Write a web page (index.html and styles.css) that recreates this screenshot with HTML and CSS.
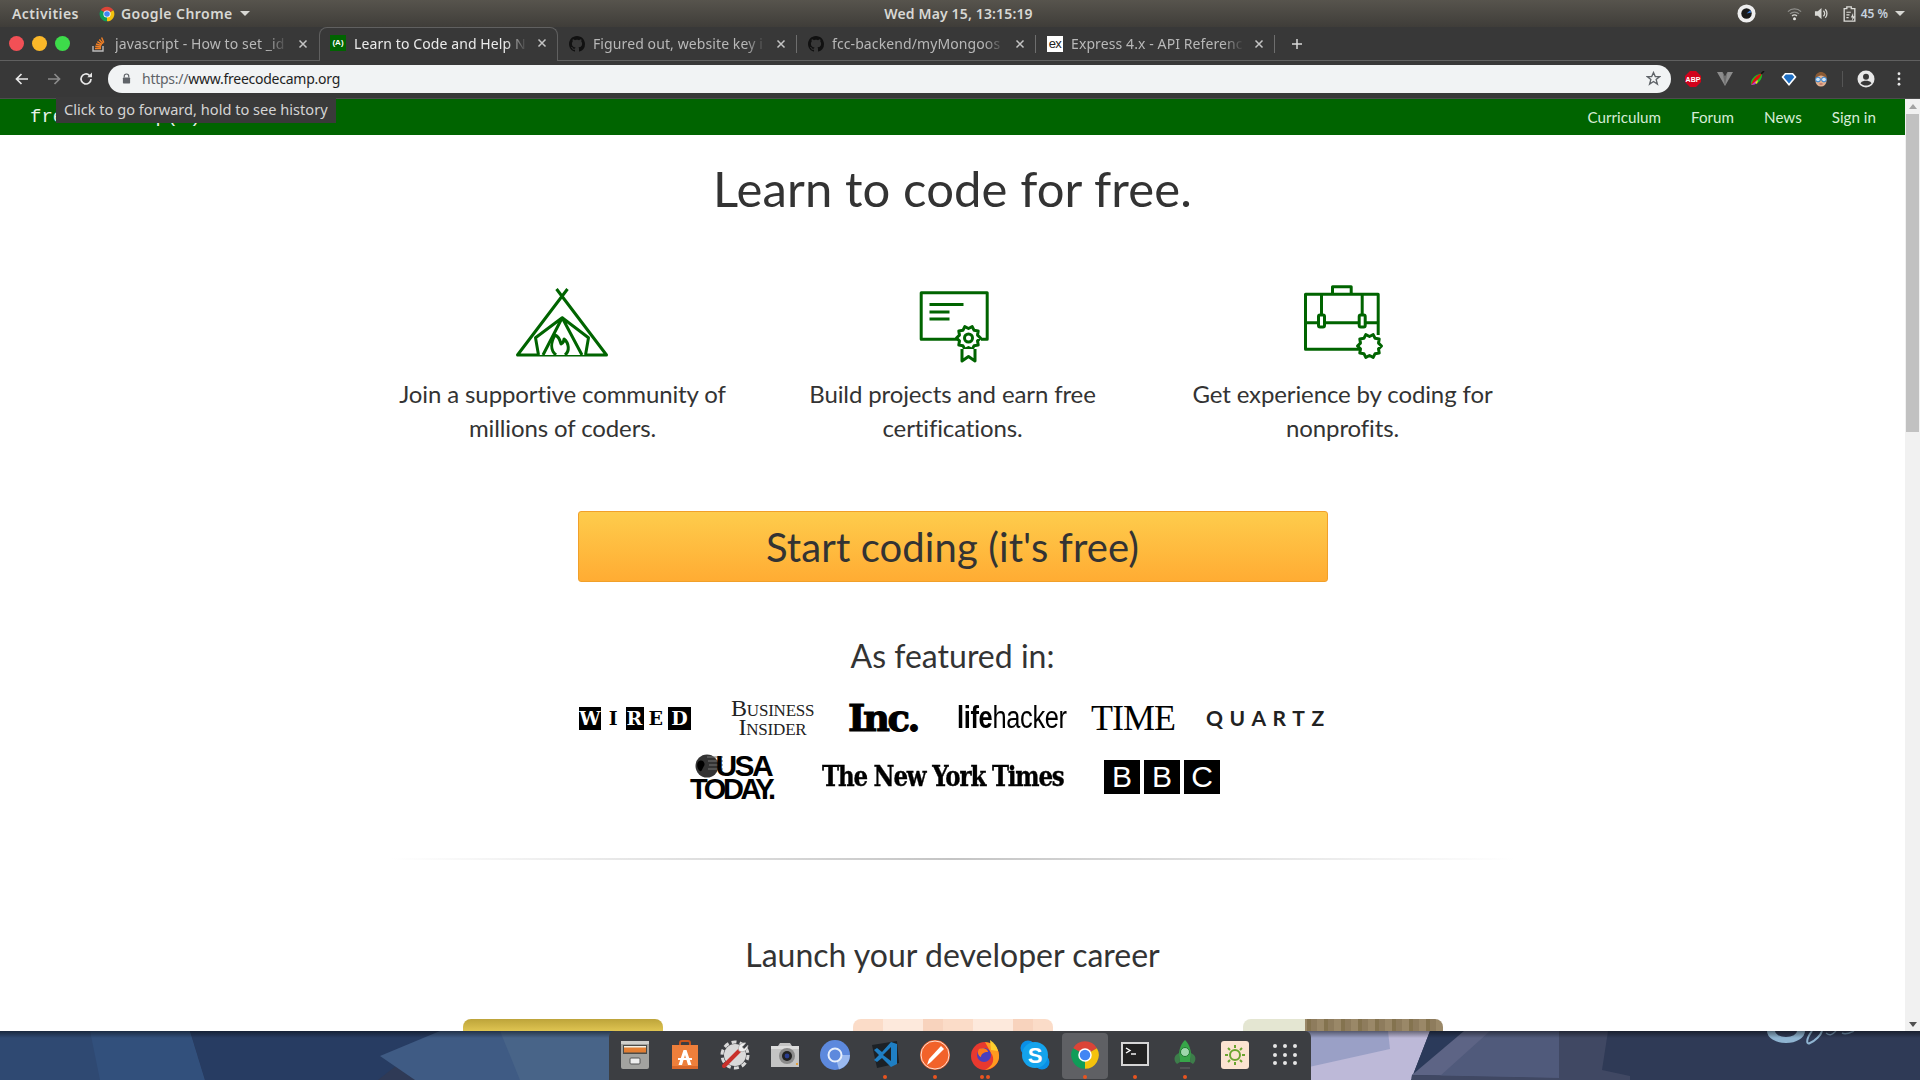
FILE: index.html
```html
<!DOCTYPE html>
<html lang="en">
<head>
<meta charset="utf-8">
<title>Learn to Code and Help Nonprofits</title>
<link rel="stylesheet" href="styles.css">
</head>
<body>
<svg class="defs" width="0" height="0">
  <symbol id="chrome" viewBox="0 0 24 24">
    <path fill="#db4437" d="M12 12 21.53 6.5A11 11 0 0 0 2.47 6.5Z"/>
    <path fill="#0f9d58" d="M12 12 2.47 6.5A11 11 0 0 0 12 23Z"/>
    <path fill="#f4c20d" d="M12 12V23A11 11 0 0 0 21.53 6.5Z"/>
    <circle cx="12" cy="12" r="5.4" fill="#fff"/>
    <circle cx="12" cy="12" r="4.2" fill="#4285f4"/>
  </symbol>
  <symbol id="github" viewBox="0 0 16 16">
    <path fill="#111" d="M8 0C3.58 0 0 3.58 0 8c0 3.54 2.29 6.53 5.47 7.59.4.07.55-.17.55-.38 0-.19-.01-.82-.01-1.49-2.01.37-2.53-.49-2.69-.94-.09-.23-.48-.94-.82-1.13-.28-.15-.68-.52-.01-.53.63-.01 1.08.58 1.23.82.72 1.21 1.87.87 2.33.66.07-.52.28-.87.51-1.07-1.78-.2-3.64-.89-3.64-3.95 0-.87.31-1.59.82-2.15-.08-.2-.36-1.02.08-2.12 0 0 .67-.21 2.2.82.64-.18 1.32-.27 2-.27.68 0 1.36.09 2 .27 1.53-1.04 2.2-.82 2.2-.82.44 1.1.16 1.92.08 2.12.51.56.82 1.27.82 2.15 0 3.07-1.87 3.75-3.65 3.95.29.25.54.73.54 1.48 0 1.07-.01 1.93-.01 2.2 0 .21.15.46.55.38A8.013 8.013 0 0016 8c0-4.42-3.58-8-8-8z"/>
  </symbol>
  <symbol id="close" viewBox="0 0 10 10">
    <path d="M1.5 1.5 8.5 8.5M8.5 1.5 1.5 8.5" fill="none" stroke="currentColor" stroke-width="1.5"/>
  </symbol>
  <polygon id="gear" points="12,0 9.03,2.94 9.71,7.05 5.58,7.69 3.71,11.41 0,9.5 -3.71,11.41 -5.58,7.69 -9.71,7.05 -9.03,2.94 -12,0 -9.03,-2.94 -9.71,-7.05 -5.58,-7.69 -3.71,-11.41 0,-9.5 3.71,-11.41 5.58,-7.69 9.71,-7.05 9.03,-2.94"/>
</svg>

<div class="screen">
  <header class="menubar">
    <div class="menu-left">
      <span class="menu-item">Activities</span>
      <span class="menu-app">
        <svg class="menu-chrome"><use href="#chrome"/></svg>
        <span class="menu-item">Google Chrome</span>
        <span class="caret"></span>
      </span>
    </div>
    <div class="clock">Wed May 15, 13:15:19</div>
    <div class="menu-right">
      <svg class="tray-rec" viewBox="0 0 20 20"><circle cx="10" cy="10" r="9.5" fill="#eee"/><circle cx="10" cy="10" r="5.5" fill="#1a1a1a"/><path d="M10 10 14 6.5 15 9Z" fill="#3a7bd5"/></svg>
      <svg class="tray-wifi" viewBox="0 0 16 16"><g fill="none" stroke="#8f8f8b" stroke-width="1.4"><path d="M1 6a10 10 0 0 1 14 0"/><path d="M3.2 8.4a7 7 0 0 1 9.6 0"/></g><path d="M5.4 10.6a3.6 3.6 0 0 1 5.2 0" fill="none" stroke="#d5d5d0" stroke-width="1.4"/><circle cx="8" cy="13.5" r="1.6" fill="#e4e4e0"/></svg>
      <svg class="tray-vol" viewBox="0 0 16 16"><path d="M1 5.5H4L8 2V14L4 10.5H1Z" fill="#d8d8d4"/><path d="M10 5a4 4 0 0 1 0 6M12 3.5a6.5 6.5 0 0 1 0 9" fill="none" stroke="#d8d8d4" stroke-width="1.4"/></svg>
      <svg class="tray-bat" viewBox="0 0 14 18"><path d="M1 3H4V1H9V3H13V17H1Z" fill="none" stroke="#dcdcd8" stroke-width="1.5"/><path d="M3.5 7H8.5M3.5 10H7M3.5 13H6" stroke="#dcdcd8" stroke-width="1.3"/><path d="M11 8 8.5 13H10.5L9.5 17 13.5 11.5H11.2Z" fill="#dcdcd8"/></svg>
      <span class="battery">45 %</span>
      <span class="caret caret-right"></span>
    </div>
  </header>

  <nav class="tabstrip">
    <div class="window-controls">
      <span class="win-dot dot-red"></span>
      <span class="win-dot dot-yellow"></span>
      <span class="win-dot dot-green"></span>
    </div>
    <div class="tab">
      <svg class="favicon" viewBox="0 0 16 16"><path d="M2 10V15H12V10" fill="none" stroke="#bcbbbb" stroke-width="1.4"/><path d="M4 12.5H10M4.3 10.2 10 11M5 8 10.4 9.5M6.3 5.7 11 8.4M8.3 3.5 12 7.6M10.6 1.5 12.8 6.6" stroke="#f48024" stroke-width="1.4"/></svg>
      <span class="tab-title">javascript - How to set _id</span>
      <svg class="tab-close"><use href="#close"/></svg>
    </div>
    <div class="tab tab-active">
      <span class="favicon fav-fcc">(A)</span>
      <span class="tab-title">Learn to Code and Help N</span>
      <svg class="tab-close"><use href="#close"/></svg>
    </div>
    <div class="tab tab-sep">
      <svg class="favicon"><use href="#github"/></svg>
      <span class="tab-title">Figured out, website key i</span>
      <svg class="tab-close"><use href="#close"/></svg>
    </div>
    <div class="tab tab-sep">
      <svg class="favicon"><use href="#github"/></svg>
      <span class="tab-title">fcc-backend/myMongoos</span>
      <svg class="tab-close"><use href="#close"/></svg>
    </div>
    <div class="tab tab-sep">
      <span class="favicon fav-ex">ex</span>
      <span class="tab-title">Express 4.x - API Referenc</span>
      <svg class="tab-close"><use href="#close"/></svg>
    </div>
    <svg class="new-tab" viewBox="0 0 12 12"><path d="M6 1V11M1 6H11" stroke="#d8d8d8" stroke-width="1.5"/></svg>
  </nav>

  <div class="toolbar">
    <div class="nav-buttons">
      <svg class="tool-icon" viewBox="0 0 16 16"><path d="M14 8H3M7.5 3 2.5 8 7.5 13" fill="none" stroke="#e8e8e8" stroke-width="1.7"/></svg>
      <svg class="tool-icon" viewBox="0 0 16 16"><path d="M2 8H13M8.5 3 13.5 8 8.5 13" fill="none" stroke="#8b8b8b" stroke-width="1.7"/></svg>
      <svg class="tool-icon" viewBox="0 0 16 16"><path d="M13 8A5 5 0 1 1 11.4 4.3" fill="none" stroke="#e8e8e8" stroke-width="1.7"/><path d="M9.3 6.3H14V1.6Z" fill="#e8e8e8"/></svg>
    </div>
    <div class="omnibox">
      <svg class="lock" viewBox="0 0 10 12"><path d="M2.5 5V3.5a2.5 2.5 0 0 1 5 0V5" fill="none" stroke="#5f6368" stroke-width="1.3"/><rect x="1" y="5" width="8" height="6.5" rx=".8" fill="#5f6368"/></svg>
      <span class="url"><span class="url-scheme">https://</span>www.freecodecamp.org</span>
      <svg class="star" viewBox="0 0 16 16"><path d="M8 1.6 9.9 6H14.6L10.8 9 12.2 14 8 11.2 3.8 14 5.2 9 1.4 6H6.1Z" fill="none" stroke="#5f6368" stroke-width="1.4"/></svg>
    </div>
    <div class="extensions">
      <svg class="ext" viewBox="0 0 16 16"><path d="M5 0H11L16 5V11L11 16H5L0 11V5Z" fill="#d0021b"/><text x="8" y="10.6" class="abp-text">ABP</text></svg>
      <svg class="ext" viewBox="0 0 16 16"><path d="M0 1H5.5L8 6 10.5 1H16L8 15Z" fill="#8c8c8c"/><path d="M5.5 1 8 6 10.5 1 8 15Z" fill="#6f6f6f"/></svg>
      <svg class="ext" viewBox="0 0 16 16"><path d="M2 14C1 9 5 4 13 2 14 8 9 14 2 14Z" fill="#19c21f"/><path d="M2 14C4 8 8 4 13 2 12 5 10 8 8 9Z" fill="#e01010"/><path d="M2 14 8 9C9 11 7 14 2 14Z" fill="#d320d3"/><path d="M6 11.5 9 9 8 13Z" fill="#f3e51a"/><path d="M12 3 15 0" stroke="#111" stroke-width="1.6"/></svg>
      <svg class="ext" viewBox="0 0 16 16"><path d="M4 2H12L15.5 6 8 15 .5 6Z" fill="#fff"/><path d="M4.8 3.5H11.2L13.4 6 8 12.5 2.6 6Z" fill="#1e6fc4"/></svg>
      <svg class="ext" viewBox="0 0 16 16"><path d="M2 8C2 3 5 1 8 1S14 3 14 8V10H2Z" fill="#8a5a34"/><ellipse cx="8" cy="10" rx="5.5" ry="5.5" fill="#e0b090"/><circle cx="5" cy="8.5" r="2.4" fill="#cfe6fa" stroke="#2b7fd0"/><circle cx="11" cy="8.5" r="2.4" fill="#cfe6fa" stroke="#2b7fd0"/><path d="M6.5 13H9.5" stroke="#a55"/></svg>
    </div>
    <span class="tool-sep"></span>
    <svg class="account" viewBox="0 0 18 18"><circle cx="9" cy="9" r="8.5" fill="#e8e8e8"/><circle cx="9" cy="6.8" r="3" fill="#383838"/><path d="M3.5 13.2C5 11 7 10.8 9 10.8S13 11 14.5 13.2C13 15 11 15.5 9 15.5S5 15 3.5 13.2Z" fill="#383838"/></svg>
    <svg class="kebab" viewBox="0 0 4 16"><circle cx="2" cy="2" r="1.6" fill="#e8e8e8"/><circle cx="2" cy="8" r="1.6" fill="#e8e8e8"/><circle cx="2" cy="14" r="1.6" fill="#e8e8e8"/></svg>
  </div>

  <div class="viewport">
    <div class="tooltip">Click to go forward, hold to see history</div>
    <main class="page">
      <div class="site-nav">
        <span class="site-logo">freeCodeCamp(Δ)</span>
        <div class="site-links">
          <a class="site-link">Curriculum</a>
          <a class="site-link">Forum</a>
          <a class="site-link">News</a>
          <a class="site-link">Sign in</a>
        </div>
      </div>

      <h1 class="headline">Learn to code for free.</h1>

      <section class="features">
        <div class="feature">
          <svg class="feature-icon" viewBox="0 0 96 80"><g class="line">
            <path d="M52.5 4 2.5 70H91.5L41.5 4"/>
            <path d="M23.5 70 20.5 52.7 47.2 32.7 73.5 52.7 70.5 70M28 70 47.2 32.7 67 70"/>
            <path d="M41 70C35 65 36 57 40 50 43 51 45 55 46 59 48 58 49 56 49 54 54 58 55 66 50 70"/>
          </g></svg>
          <p class="feature-text">Join a supportive community of millions of coders.</p>
        </div>
        <div class="feature">
          <svg class="feature-icon" viewBox="0 0 96 80"><g class="line">
            <path d="M53 54.3H16.2V7.7H82.2V54.3H76"/>
            <path d="M24.5 19.5H58.5M24.5 27H44.5M24.5 34H44.5"/>
            <use href="#gear" transform="translate(63.5 53)"/>
            <circle cx="63.5" cy="53" r="4"/>
            <path d="M57 64V76L63.5 71.5 70 76V64"/>
          </g></svg>
          <p class="feature-text">Build projects and earn free certifications.</p>
        </div>
        <div class="feature">
          <svg class="feature-icon" viewBox="0 0 96 80"><g class="line">
            <path d="M37.5 9.3V1.7H56.2V9.3"/>
            <path d="M64 64.3H10.5V9.3H83.2V50"/>
            <path d="M10.5 37.7H23.5M29.5 37.7H64M70 37.7H83.2"/>
            <path d="M26.5 9.3V30M67.2 9.3V30"/>
            <rect x="23.5" y="30" width="6" height="12" rx="1.5"/>
            <rect x="64.2" y="30" width="6" height="12" rx="1.5"/>
            <use href="#gear" transform="translate(74.5 61)"/>
          </g></svg>
          <p class="feature-text">Get experience by coding for nonprofits.</p>
        </div>
      </section>

      <a class="cta">Start coding (it's free)</a>

      <h2 class="featured-title">As featured in:</h2>
      <div class="logo-row">
        <span class="logo wired"><b class="wb w1">W</b><b class="wl w2">I</b><b class="wb w3">R</b><b class="wl w4">E</b><b class="wb w5">D</b></span>
        <span class="logo bi">Business<br>Insider</span>
        <span class="logo inc">Inc.</span>
        <span class="logo lifehacker"><b class="life">life</b>hacker</span>
        <span class="logo time">TIME</span>
        <span class="logo quartz">QUARTZ</span>
      </div>
      <div class="logo-row logo-row-2">
        <span class="logo usa">
          <svg class="usa-globe" viewBox="0 0 28 24"><circle cx="12" cy="12" r="11.5" fill="#333"/><path d="M3 8C7 4 11 9 9 12S7 18 5 17 1 11 3 8Z" fill="#000"/><path d="M12 3H28M13 7H28M14 11H28M13 15H28" stroke="#777" stroke-width="1"/></svg>
          <span class="usa-top">USA</span>
          <span class="usa-bottom">TODAY.</span>
        </span>
        <span class="logo nyt">The New York Times</span>
        <span class="logo bbc"><b class="bbc-box">B</b><b class="bbc-box">B</b><b class="bbc-box">C</b></span>
      </div>

      <div class="divider"></div>

      <h2 class="career-title">Launch your developer career</h2>
      <section class="cards">
        <div class="card-cell"><div class="card-img img-gold"></div></div>
        <div class="card-cell"><div class="card-img img-peach"></div></div>
        <div class="card-cell"><div class="card-img img-wood"></div></div>
      </section>
    </main>
    <aside class="scrollbar">
      <span class="arrow-up"></span>
      <span class="thumb"></span>
      <span class="arrow-down"></span>
    </aside>
  </div>

  <footer class="desk">
    <svg class="wallpaper" viewBox="0 0 1920 49" preserveAspectRatio="none">
      <rect width="1920" height="49" fill="#2f3a56"/>
      <polygon points="0,0 190,0 205,49 0,49" fill="#2f4972"/>
      <polygon points="90,0 190,0 205,49 100,49" fill="#32507c"/>
      <polygon points="190,0 440,0 378,49 205,49" fill="#273c62"/>
      <polygon points="440,0 620,0 620,49 415,49 380,25" fill="#3f5b84"/>
      <polygon points="500,0 620,0 620,49 520,49" fill="#486488"/>
      <polygon points="1300,0 1430,0 1411,49 1300,49" fill="#bdb9d8"/>
      <polygon points="1300,0 1388,0 1390,18 1300,38" fill="#9aa0c6"/>
      <polygon points="1430,0 1464,0 1412,44 1411,49" fill="#2b3a5a"/>
      <polygon points="1412,44 1464,0 1559,0 1559,47" fill="#5d6485"/>
      <polygon points="1490,0 1559,0 1559,47 1440,45" fill="#505a7b"/>
      <polygon points="1559,0 1608,0 1602,39 1630,45 1630,49 1412,49 1412,44 1559,47" fill="#404863"/>
      <path d="M1767 0A19 12 0 0 0 1805 0H1797A11 6 0 0 1 1775 0Z" fill="#8fb4d1"/>
      <path d="M1812 0C1806 8 1806 14 1810 12 1815 10 1821 4 1822 0" fill="none" stroke="#8fb4d1" stroke-width="2"/>
      <path d="M1826 2C1830 5 1832 4 1836 0M1842 2C1846 4 1850 2 1854 0" fill="none" stroke="#6f8eaa" stroke-width="1.5"/>
    </svg>
    <div class="dock">
      <div class="dock-item">
        <svg class="dock-icon" viewBox="0 0 30 30"><rect x="1" y="1" width="28" height="28" rx="2" fill="#a3a3a0"/><rect x="1" y="1" width="28" height="3" fill="#cfcfcc"/><rect x="3" y="5" width="24" height="9" fill="#4b4b48"/><rect x="4" y="6" width="22" height="3" fill="#f3f0e5"/><rect x="4" y="7.5" width="22" height="5" fill="#e27e33"/><rect x="10" y="18" width="10" height="6" rx="1" fill="#eee" stroke="#555"/></svg>
      </div>
      <div class="dock-item">
        <svg class="dock-icon" viewBox="0 0 30 30"><path d="M10 7V3a2 2 0 0 1 2-2h6a2 2 0 0 1 2 2V7" fill="none" stroke="#c9531a" stroke-width="2"/><path d="M2 5H28V29H2Z" fill="#ee7f3b"/><path d="M2 26H28V29H2Z" fill="#d9682a"/><path d="M13.5 10H16.500L21.500 25H18L15 15 12 25H8.500ZM8 18H22V20H8Z" fill="#fff"/></svg>
      </div>
      <div class="dock-item">
        <svg class="dock-icon" viewBox="0 0 30 30"><circle cx="15" cy="15" r="11" fill="#d9d9d9"/><circle cx="15" cy="15" r="13" fill="none" stroke="#d9d9d9" stroke-width="3" stroke-dasharray="5 3.2"/><path d="M4 26 19 11" stroke="#c8302a" stroke-width="4" stroke-linecap="round"/><path d="M19 11C17 6 21 2 26 3L22 7 24 9 28 5C28 10 24 13 19 11Z" fill="#eee" stroke="#999" stroke-width=".6"/></svg>
      </div>
      <div class="dock-item">
        <svg class="dock-icon" viewBox="0 0 30 30"><path d="M1 6H8L10 3H20L22 6H29V27H1Z" fill="#c4c4c4"/><path d="M1 6H29V9H1Z" fill="#ddd"/><circle cx="17" cy="16" r="8" fill="#8a8a8a"/><circle cx="17" cy="16" r="5" fill="#222"/><circle cx="17" cy="16" r="2.4" fill="#2a3d8f"/><rect x="26" y="23" width="2" height="2" fill="#e8a23c"/></svg>
      </div>
      <div class="dock-item">
        <svg class="dock-icon" viewBox="0 0 30 30"><circle cx="15" cy="15" r="15" fill="#5d89dd"/><path d="M15 15 30 15A15 15 0 0 1 19 29.5Z" fill="#9ab9ef"/><circle cx="15" cy="15" r="6.5" fill="#5d89dd" stroke="#e6eefb" stroke-width="2"/></svg>
      </div>
      <div class="dock-item">
        <svg class="dock-icon" viewBox="0 0 30 30"><path d="M2 5 27 1 29 23 7 28Z" fill="#1c2126"/><path d="M21 2 27 4V24L21 27 12 18 7 22 4 20 9 15 4 10 7 8 12 12Z" fill="#1f7fc4"/><path d="M21 7V21L13 15Z" fill="#1c2126"/></svg>
        <span class="run-dots"><i class="run-dot"></i></span>
      </div>
      <div class="dock-item">
        <svg class="dock-icon" viewBox="0 0 30 30"><circle cx="15" cy="15" r="15" fill="#f2622a"/><circle cx="15" cy="15" r="14" fill="none" stroke="#fff" stroke-width=".8"/><path d="M7 25 9 19 21 6 24 9 11 22Z" fill="#fff"/></svg>
        <span class="run-dots"><i class="run-dot"></i></span>
      </div>
      <div class="dock-item">
        <svg class="dock-icon" viewBox="0 0 30 30"><circle cx="15" cy="16" r="14" fill="#e8392f"/><path d="M15 2C25 3 30 10 29 18 28 25 22 29 15 30 24 26 25 18 21 13Z" fill="#ff9a1f"/><path d="M20 0C24 3 27 6 28 11L21 10Z" fill="#ffcf2e"/><circle cx="14" cy="15" r="7" fill="#4a3fbe"/><path d="M9 9C13 7 18 9 18 12 14 12 11 14 11 17 8 16 7 12 9 9Z" fill="#ff7a1a"/></svg>
        <span class="run-dots"><i class="run-dot"></i><i class="run-dot"></i></span>
      </div>
      <div class="dock-item">
        <svg class="dock-icon" viewBox="0 0 30 30"><circle cx="8" cy="8" r="7.5" fill="#0a8fe6"/><circle cx="22" cy="22" r="7.5" fill="#0a8fe6"/><circle cx="15" cy="15" r="13" fill="#14a3ec"/><text x="15" y="22.500" class="skype-text">S</text></svg>
      </div>
      <div class="dock-item dock-active">
        <svg class="dock-icon"><use href="#chrome"/></svg>
        <span class="run-dots"><i class="run-dot"></i></span>
      </div>
      <div class="dock-item">
        <svg class="dock-icon" viewBox="0 0 30 30"><rect x="1" y="2" width="28" height="24" fill="#d5d5d5"/><rect x="3" y="4" width="24" height="20" fill="#222"/><path d="M6 8 10 10.5 6 13" fill="none" stroke="#fff" stroke-width="1.4"/><path d="M11 14H16" stroke="#fff" stroke-width="1.4"/></svg>
        <span class="run-dots"><i class="run-dot"></i></span>
      </div>
      <div class="dock-item">
        <svg class="dock-icon" viewBox="0 0 30 30"><path d="M15 0C21 6 22 14 20 22H10C8 14 9 6 15 0Z" fill="#37a649"/><circle cx="15" cy="12" r="4.500" fill="#9fd8ac" stroke="#1f7a30"/><path d="M9 13C4 15 3 20 7 24L10 22ZM21 13C26 15 27 20 23 24L20 22Z" fill="#3d7d4a"/><path d="M10 28H20" stroke="#666" stroke-width="1"/></svg>
        <span class="run-dots"><i class="run-dot"></i></span>
      </div>
      <div class="dock-item">
        <svg class="dock-icon" viewBox="0 0 30 30"><rect x="1" y="1" width="28" height="28" rx="3" fill="#fbe3d1"/><circle cx="15" cy="15" r="5" fill="none" stroke="#6aa42f" stroke-width="2"/><path d="M15 5V8M15 22V25M5 15H8M22 15H25M8 8 10 10M20 20 22 22M22 8 20 10M10 20 8 22" stroke="#6aa42f" stroke-width="2"/></svg>
      </div>
      <div class="dock-item">
        <span class="app-grid"><i class="grid-dot"></i><i class="grid-dot"></i><i class="grid-dot"></i><i class="grid-dot"></i><i class="grid-dot"></i><i class="grid-dot"></i><i class="grid-dot"></i><i class="grid-dot"></i><i class="grid-dot"></i></span>
      </div>
    </div>
  </footer>
</div>
</body>
</html>
```

FILE: styles.css
```css
* { box-sizing: border-box; }
html, body { margin: 0; padding: 0; height: 100%; }
body { overflow: hidden; font-family: "Lato", "Liberation Sans", sans-serif; background: #fff; }
.defs { position: absolute; }

.screen { width: 1920px; height: 1080px; display: flex; flex-direction: column; overflow: hidden; }

/* GNOME top bar */
.menubar {
  height: 27px; flex: none; display: grid; grid-template-columns: 1fr auto 1fr; align-items: center;
  background: linear-gradient(#57544d, #3f3d39);
  font-family: "Noto Sans", sans-serif; font-size: 14px; font-weight: 600; color: #d8d8d4;
  padding: 0 15px 0 12px;
}
.menu-left { display: flex; align-items: center; gap: 20px; }
.menu-item { letter-spacing: .45px; }
.menu-app { display: flex; align-items: center; gap: 6px; }
.menu-chrome { width: 16px; height: 16px; }
.caret { width: 0; height: 0; border-left: 5px solid transparent; border-right: 5px solid transparent; border-top: 5px solid #d8d8d4; margin-left: 1px; }
.clock { text-align: center; letter-spacing: .15px; }
.menu-right { display: flex; align-items: center; justify-content: flex-end; }
.tray-rec { width: 19px; height: 19px; margin-right: 31px; }
.tray-wifi { width: 15px; height: 15px; margin-right: 12px; }
.tray-vol { width: 15px; height: 15px; margin-right: 14px; }
.tray-bat { width: 13px; height: 16px; margin-right: 5px; }
.battery { font-size: 12px; color: #c7d2de; }
.caret-right { margin-left: 7px; }

/* Tab strip */
.tabstrip {
  height: 34px; flex: none; display: flex; align-items: stretch;
  background: #383838; border-bottom: 1px solid #606060; position: relative;
  font-family: "Noto Sans", sans-serif; font-size: 14px; color: #b8b8b8;
}
.window-controls { width: 80px; flex: none; display: flex; align-items: center; gap: 8px; padding: 0 0 1px 9px; }
.win-dot { width: 15px; height: 15px; border-radius: 50%; }
.dot-red { background: #f25056; }
.dot-yellow { background: #fbb829; }
.dot-green { background: #3ddc4a; }
.tab { width: 239px; height: 34px; display: flex; align-items: center; padding: 0 11px 1px 11px; gap: 8px; position: relative; }
.tab-active { background: #383838; color: #eaeaea; border: 1px solid #606060; border-bottom: 0; border-radius: 8px 8px 0 0; padding: 0 10px 3px 10px; }
.tab-sep::after { content: ""; position: absolute; right: 0; top: 8px; height: 18px; width: 1px; background: #6e6e6e; }
.favicon { width: 16px; height: 16px; flex: none; }
.fav-fcc { background: #006400; color: #fff; font: 700 8px/16px "Liberation Sans", sans-serif; text-align: center; }
.fav-ex { background: #fff; color: #222; font: 400 13px/16px "Liberation Sans", sans-serif; text-align: center; letter-spacing: -0.5px; }
.tab-title { flex: 1; min-width: 0; white-space: nowrap; overflow: hidden; letter-spacing: .1px; -webkit-mask-image: linear-gradient(to right, #000 88%, transparent 100%); mask-image: linear-gradient(to right, #000 88%, transparent 100%); }
.tab-close { width: 10px; height: 10px; flex: none; color: #c4c4c4; margin-left: 2px; }
.new-tab { width: 12px; height: 12px; align-self: center; margin-left: 16px; }

/* Toolbar */
.toolbar {
  height: 38px; flex: none; display: flex; align-items: flex-start; background: #383838;
  border-bottom: 1px solid #4d4d4d; padding-top: 4px;
}
.nav-buttons { display: flex; gap: 16px; padding: 6px 0 0 14px; width: 108px; }
.tool-icon { width: 16px; height: 16px; }
.omnibox {
  width: 1563px; height: 28px; border-radius: 14px; background: #f1f3f4; display: flex; align-items: center;
  padding: 0 10px 2px 14px; font-family: "Noto Sans", sans-serif; font-size: 14px; color: #1f1f1f;
}
.lock { width: 9px; height: 11px; margin-right: 11px; }
.url { flex: 1; letter-spacing: -0.25px; }
.url-scheme { color: #5f6368; }
.star { width: 15px; height: 15px; }
.extensions { display: flex; gap: 16px; padding: 6px 0 0 14px; }
.ext { width: 16px; height: 16px; }
.abp-text { font: 700 7px "Liberation Sans", sans-serif; fill: #fff; text-anchor: middle; }
.tool-sep { width: 1px; height: 16px; background: #555; margin: 6px 0 0 13px; }
.account { width: 18px; height: 18px; margin: 5px 0 0 14px; }
.kebab { width: 4px; height: 14px; margin: 7px 0 0 22px; }

/* Browser viewport */
.viewport { flex: 1; min-height: 0; display: flex; position: relative; }
.tooltip {
  position: absolute; left: 56px; top: -2px; height: 26px; padding: 0 8px 2px; display: flex; align-items: center;
  background: #3a3a3a; color: #d4d4d4; font-family: "Noto Sans", sans-serif; font-size: 14.6px; z-index: 5;
}
.page { flex: 1; min-width: 0; overflow: hidden; color: #333; }
.site-nav { height: 36px; background: #006400; display: flex; align-items: center; justify-content: space-between; padding: 0 29px 1px 30px; }
.site-logo { font: 400 19px "Liberation Mono", monospace; color: #e8f2e8; }
.site-links { display: flex; gap: 30px; }
.site-link { font-size: 15.2px; color: #d6ecd6; }

.headline { margin: 27px 0 0; font-size: 49px; line-height: 53px; font-weight: 400; text-align: center; color: #333; letter-spacing: .1px; }
.features { width: 1170px; margin: 70px auto 0; display: grid; grid-template-columns: repeat(3, 1fr); }
.feature { display: flex; flex-direction: column; align-items: center; padding: 0 15px; }
.feature-icon { width: 96px; height: 80px; display: block; }
.line { fill: #fff; stroke: #006400; stroke-width: 3; stroke-linejoin: round; }
.feature-text { margin: 12px 0 0; font-size: 24px; line-height: 34px; text-align: center; color: #333; letter-spacing: -.12px; }

.cta {
  display: flex; align-items: center; justify-content: center; width: 750px; height: 71px; margin: 66px auto 0;
  background: linear-gradient(#fecc4c, #ffac33); border: 1px solid #f1a02a; border-radius: 3px;
  font-size: 40px; color: #333; letter-spacing: .1px;
}
.featured-title, .career-title { margin: 0; font-weight: 400; text-align: center; color: #333; font-size: 32px; line-height: 35px; }
.featured-title { margin-top: 56px; }

.logo-row { display: flex; justify-content: center; align-items: center; color: #000; height: 36px; margin-top: 27px; }
.logo-row-2 { margin-top: 23px; padding-left: 5px; }
.logo { display: block; flex: none; white-space: nowrap; }

.wired { width: 112px; height: 23px; display: flex; justify-content: space-between; font: 700 19px/23px "DejaVu Serif", serif; }
.wb, .wl { display: block; height: 23px; text-align: center; overflow: hidden; }
.wb { background: #000; color: #fff; }
.wl { color: #000; }
.w1 { width: 22px; } .w2 { width: 17px; } .w3 { width: 18px; } .w4 { width: 17px; } .w5 { width: 23px; }

.bi { width: 83px; margin-left: 40px; font: 400 24px/19px "Liberation Serif", serif; font-variant: small-caps; text-align: center; color: #222; letter-spacing: -.2px; }
.inc { width: 75px; margin-left: 34px; font: 700 37px/30px "DejaVu Serif", serif; letter-spacing: -2.4px; -webkit-text-stroke: 1.1px #000; }
.lifehacker { width: 110px; margin-left: 34px; font: 400 31px/30px "Liberation Sans", sans-serif; letter-spacing: -0.4px; transform: scaleX(.82); transform-origin: left center; }
.life { font-weight: 700; }
.time { width: 84px; margin-left: 24px; font: 400 36px/30px "Liberation Serif", serif; letter-spacing: -1px; }
.quartz { width: 120px; margin-left: 31px; font: 700 21px/24px "Lato", sans-serif; letter-spacing: 6.6px; color: #222; }

.usa { width: 82px; height: 46px; position: relative; font-family: "Liberation Sans", sans-serif; font-weight: 700; }
.usa-globe { position: absolute; left: 5px; top: 0; width: 28px; height: 24px; }
.usa-top { position: absolute; right: 1px; top: 1px; font-size: 30px; line-height: 22px; letter-spacing: -2.6px; }
.usa-bottom { position: absolute; left: 0; top: 23.5px; font-size: 29px; line-height: 22px; letter-spacing: -3.4px; }
.nyt { width: 243px; margin-left: 50px; font: 700 27px/32px "DejaVu Serif", serif; letter-spacing: -1.4px; -webkit-text-stroke: .4px #000; transform: scaleX(.85); transform-origin: left center; }
.bbc { width: 116px; margin-left: 39px; display: flex; justify-content: space-between; }
.bbc-box { width: 36px; height: 34px; background: #000; color: #fff; font: 400 30px/34px "Liberation Sans", sans-serif; text-align: center; }

.divider { width: 1125px; height: 2px; margin: 63px auto 0; background: linear-gradient(to right, rgba(0,0,0,0), #c4c4c4 50%, rgba(0,0,0,0)); }
.career-title { margin-top: 77px; }
.cards { width: 1170px; margin: 47px auto 0; display: grid; grid-template-columns: repeat(3, 1fr); }
.card-cell { display: flex; justify-content: center; }
.card-img { width: 200px; height: 200px; border-radius: 8px 8px 0 0; }
.img-gold { background: linear-gradient(#bda43a, #e4c955 14px); }
.img-peach { background: repeating-linear-gradient(to right, #fbdcc8 0 30px, #fde9dc 30px 70px, #f8d3bd 70px 90px); }
.img-wood { background: linear-gradient(to right, #e4e6d2 0 62px, transparent 62px), repeating-linear-gradient(to right, #8e7c5d 0 6px, #9a8868 6px 13px, #84734f 13px 17px); }

.scrollbar { width: 15px; flex: none; background: #f1f1f1; display: flex; flex-direction: column; align-items: center; padding-top: 5px; }
.arrow-up { width: 0; height: 0; border-left: 4.5px solid transparent; border-right: 4.5px solid transparent; border-bottom: 5px solid #a3a3a3; }
.thumb { width: 13px; height: 318px; margin-top: 5px; background: #c1c1c1; }
.arrow-down { width: 0; height: 0; margin-top: auto; margin-bottom: 4px; border-left: 4.5px solid transparent; border-right: 4.5px solid transparent; border-top: 5px solid #505050; }

/* Desktop + dock */
.desk { height: 49px; flex: none; display: flex; justify-content: center; position: relative; }
.wallpaper { position: absolute; left: 0; top: 0; width: 100%; height: 100%; }
.desk::after { content: ""; position: absolute; left: 0; right: 0; top: 0; height: 7px; background: linear-gradient(rgba(0,0,0,.45), rgba(0,0,0,0)); }
.dock { position: relative; z-index: 1; width: 702px; height: 49px; padding: 0 1px; display: flex; background: #3c3e42; border-radius: 6px 6px 0 0; }
.dock-item { width: 50px; height: 49px; display: flex; align-items: center; justify-content: center; position: relative; padding-bottom: 2px; }
.dock-active::before { content: ""; position: absolute; left: 2px; right: 2px; top: 2px; bottom: 1px; background: rgba(255,255,255,.18); border-radius: 4px; }
.dock-icon { width: 30px; height: 30px; position: relative; }
.run-dots { position: absolute; bottom: 1px; left: 0; right: 0; display: flex; justify-content: center; gap: 2px; }
.run-dot { width: 4px; height: 4px; border-radius: 50%; background: #e95420; }
.skype-text { font: 700 22px "Liberation Sans", sans-serif; fill: #fff; text-anchor: middle; }
.app-grid { display: grid; grid-template-columns: repeat(3, 4px); gap: 4.5px 6px; }
.grid-dot { width: 4px; height: 4px; background: #e6e6e6; border-radius: 50%; }
```
